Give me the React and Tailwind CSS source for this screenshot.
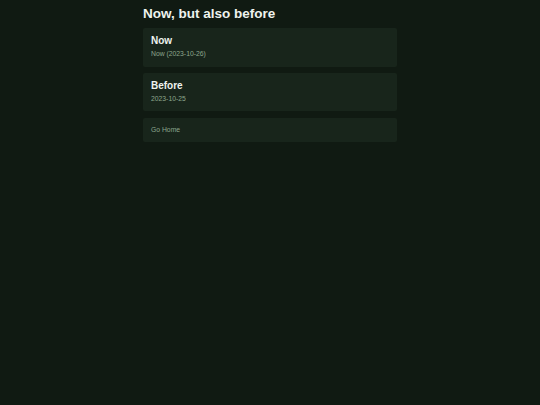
export default function App() {
  return (
    <div className="min-h-screen w-full bg-[#101a12] font-['Liberation_Sans',Arial,sans-serif]">
      <div className="mx-auto w-[254px] pt-[5px]">
        <h1 className="text-[13.5px] font-bold leading-[17px] text-[#eef3ee]">Now, but also before</h1>
        <div className="mt-[6px] flex flex-col gap-[6.3px]">
          <div className="h-[38.6px] rounded-[2px] bg-[#18251b] px-[8px] pt-[7px]">
            <h2 className="text-[10px] font-bold leading-[12px] text-[#eef3ee]">Now</h2>
            <p className="mt-[3px] text-[6.8px] leading-[8px] text-[#8da58d]">Now (2023-10-26)</p>
          </div>
          <div className="h-[38.6px] rounded-[2px] bg-[#18251b] px-[8px] pt-[7px]">
            <h2 className="text-[10px] font-bold leading-[12px] text-[#eef3ee]">Before</h2>
            <p className="mt-[3px] text-[6.8px] leading-[8px] text-[#8da58d]">2023-10-25</p>
          </div>
          <a href="#" className="flex h-[24px] items-center rounded-[2px] bg-[#18251b] px-[8px] text-[6.8px] text-[#8da58d]">
            Go Home
          </a>
        </div>
      </div>
    </div>
  )
}
